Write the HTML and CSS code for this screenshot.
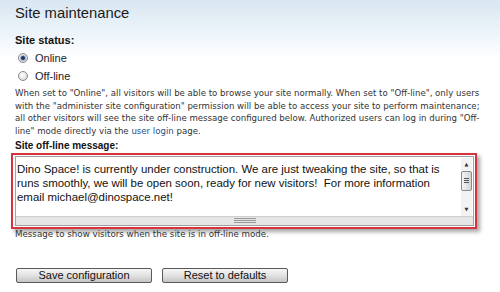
FILE: index.html
```html
<!DOCTYPE html>
<html lang="en">
<head>
    <meta charset="UTF-8">
    <title>Site maintenance</title>
    <link rel="stylesheet" href="styles.css">
</head>
<body>
    <div class="page">
        <h1 class="title">Site maintenance</h1>

        <div class="field-label">Site status:</div>
        <div class="radio-row first">
            <span class="radio checked"></span>
            <span class="radio-text">Online</span>
        </div>
        <div class="radio-row">
            <span class="radio"></span>
            <span class="radio-text">Off-line</span>
        </div>
        <p class="desc">When set to "Online", all visitors will be able to browse your site normally. When set to "Off-line", only users with the "administer site configuration" permission will be able to access your site to perform maintenance; all other visitors will see the site off-line message configured below. Authorized users can log in during "Off-line" mode directly via the <a href="#" class="link">user login</a> page.</p>

        <div class="field-label msg-label">Site off-line message:</div>
        <div class="highlight">
            <div class="textbox">
                <div class="textbox-body">
                    <div class="textbox-text">Dino Space! is currently under construction. We are just tweaking the site, so that is<br>runs smoothly, we will be open soon, ready for new visitors!&nbsp; For more information<br>email michael@dinospace.net!</div>
                    <div class="vscroll">
                        <div class="arrow">&#9650;</div>
                        <div class="thumb"></div>
                        <div class="track"></div>
                        <div class="arrow">&#9660;</div>
                    </div>
                </div>
                <div class="grippie"><span class="grip"></span></div>
            </div>
        </div>
        <div class="help">Message to show visitors when the site is in off-line mode.</div>

        <div class="actions">
            <button class="btn save">Save configuration</button>
            <button class="btn reset">Reset to defaults</button>
        </div>
    </div>
</body>
</html>
```

FILE: styles.css
```css
body {
    margin: 0;
    font-family: "DejaVu Sans", Verdana, sans-serif;
    color: #222;
    background: #fff linear-gradient(#d8e7f2 0, #eef5fa 35px, #fff 58px) no-repeat;
    height: 292px;
    overflow: hidden;
}
.page {
    padding: 3px 0 0 15px;
}
.title {
    margin: 0;
    font-family: "Liberation Sans", Arial, sans-serif;
    font-size: 14.8px;
    font-weight: normal;
    line-height: 20px;
    color: #1b1b1b;
}
.field-label {
    margin-top: 11px;
    font-family: "Liberation Sans", Arial, sans-serif;
    font-size: 11px;
    font-weight: bold;
    line-height: 13px;
    color: #111;
}
.radio-row {
    display: flex;
    align-items: center;
    height: 18px;
    padding-left: 3px;
}
.radio-row.first {
    margin-top: 2px;
}
.radio {
    width: 8px;
    height: 8px;
    border: 1px solid #888;
    border-radius: 50%;
    background: radial-gradient(circle at 40% 35%, #fff 0, #e4e4e4 60%, #c6c6c6 100%);
    position: relative;
}
.radio.checked::after {
    content: "";
    position: absolute;
    left: 2px;
    top: 2px;
    width: 4px;
    height: 4px;
    border-radius: 50%;
    background: #1e3560;
    box-shadow: 0 0 0 1px #9fb5d4;
}
.radio-text {
    margin-left: 7px;
    font-family: "Liberation Sans", Arial, sans-serif;
    font-size: 11px;
    color: #222;
}
.desc {
    margin: 2px 0 0;
    width: 476px;
    font-size: 8.6px;
    line-height: 12.7px;
    color: #333;
}
.link {
    color: #27508a;
    text-decoration: none;
}
.msg-label {
    margin-top: 1px;
    font-size: 10px;
}
.highlight {
    margin: 1px 0 0 -4px;
    width: 459px;
    border: 2px solid #d7333d;
    padding: 1px 1px 1px 2px;
    box-shadow: 3px 3px 4px rgba(0, 0, 0, 0.35);
}
.textbox {
    border: 1px solid #a0a0a0;
    background: #fff;
}
.textbox-body {
    display: flex;
    height: 59px;
}
.textbox-text {
    flex: 1;
    padding: 5px 4px 0 1px;
    font-family: "Liberation Sans", Arial, sans-serif;
    font-size: 11.45px;
    line-height: 14.2px;
    white-space: nowrap;
    color: #111;
}
.vscroll {
    width: 11px;
    margin: 1px 1px 0 0;
    display: flex;
    flex-direction: column;
    background: #f3f3f3;
}
.arrow {
    height: 13px;
    font-size: 5px;
    line-height: 13px;
    text-align: center;
    color: #333;
}
.thumb {
    height: 20px;
    border: 1px solid #8a8a8a;
    border-radius: 2px;
    background: linear-gradient(90deg, #f4f4f4, #d4d4d4);
    box-sizing: border-box;
    position: relative;
}
.thumb::after {
    content: "";
    position: absolute;
    left: 2px;
    right: 2px;
    top: 6px;
    height: 5px;
    background: repeating-linear-gradient(#555 0, #555 1px, transparent 1px, transparent 2px);
}
.track {
    flex: 1;
}
.grippie {
    height: 8px;
    border-top: 1px solid #cfcfcf;
    background: #e6e6e6;
    display: flex;
    justify-content: center;
    align-items: center;
}
.grip {
    width: 22px;
    height: 5px;
    background: repeating-linear-gradient(#999 0, #999 1px, #e6e6e6 1px, #e6e6e6 2px);
}
.help {
    font-size: 8.7px;
    line-height: 11px;
    color: #333;
}
.actions {
    display: flex;
    gap: 10px;
    margin-top: 28px;
    padding-left: 1px;
}
.btn {
    height: 15px;
    padding: 0;
    border: 1px solid #5a5a5a;
    border-radius: 2px;
    background: linear-gradient(#f6f6f6, #e2e2e2 50%, #c4c4c4);
    font-family: "Liberation Sans", Arial, sans-serif;
    font-size: 11px;
    line-height: 13px;
    color: #111;
}
.save {
    width: 136px;
}
.reset {
    width: 126px;
}
```
